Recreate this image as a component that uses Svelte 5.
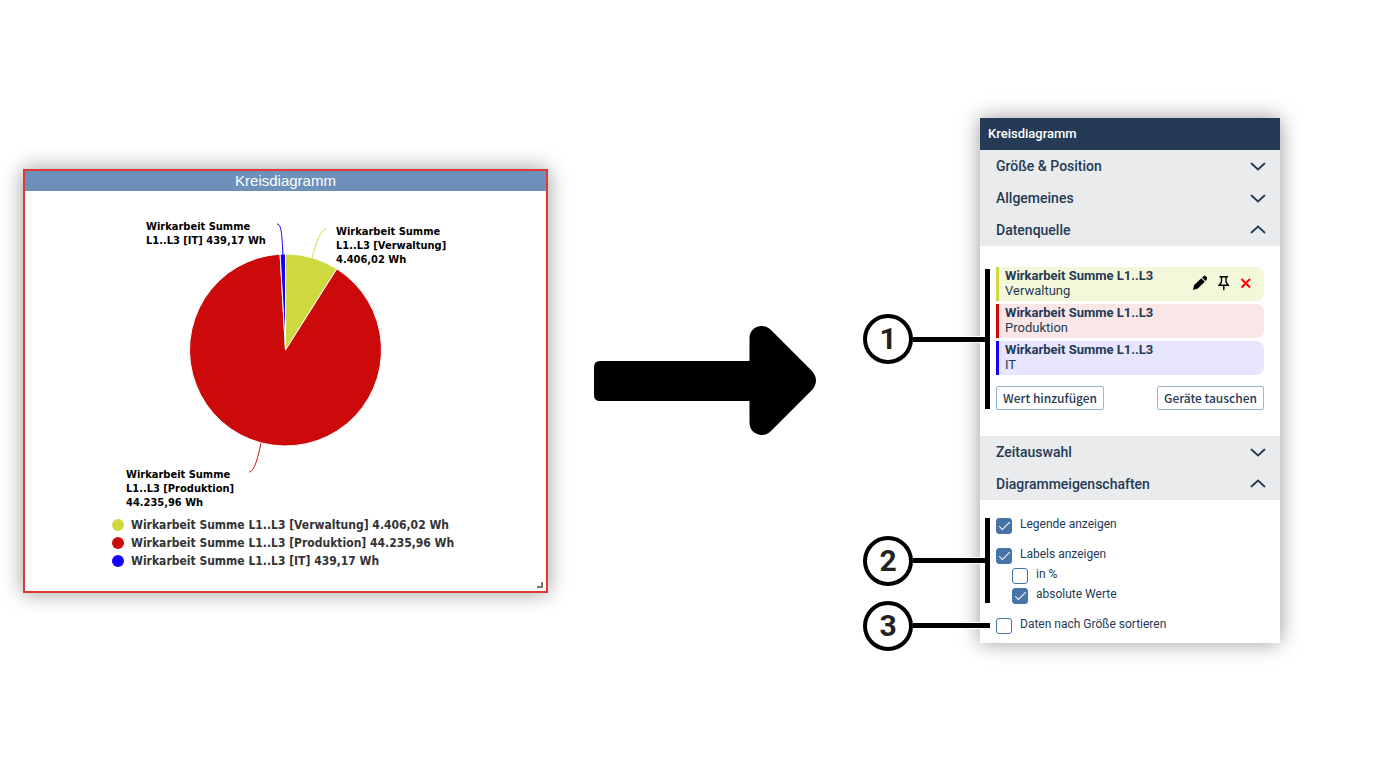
<script lang="ts">
  interface Series {
    name: string;
    device: string;
    value: number;
    unit: string;
    color: string;
    background: string;
    labelX: number;
    labelY: number;
    lines: string[];
    connector: string;
  }

  const series: Series[] = [
    {
      name: 'Wirkarbeit Summe L1..L3',
      device: 'Verwaltung',
      value: 4406.02,
      unit: 'Wh',
      color: '#cfda41',
      background: '#f4f7d9',
      labelX: 311,
      labelY: 44,
      lines: ['Wirkarbeit Summe', 'L1..L3 [Verwaltung]', '4.406,02 Wh'],
      connector: 'M301 38C296 38 291 52 287 67',
    },
    {
      name: 'Wirkarbeit Summe L1..L3',
      device: 'Produktion',
      value: 44235.96,
      unit: 'Wh',
      color: '#cc0a0a',
      background: '#fae6e6',
      labelX: 101,
      labelY: 287,
      lines: ['Wirkarbeit Summe', 'L1..L3 [Produktion]', '44.235,96 Wh'],
      connector: 'M224 281C229 281 233 267 236 252',
    },
    {
      name: 'Wirkarbeit Summe L1..L3',
      device: 'IT',
      value: 439.17,
      unit: 'Wh',
      color: '#1400ff',
      background: '#e7e5ff',
      labelX: 121,
      labelY: 39,
      lines: ['Wirkarbeit Summe', 'L1..L3 [IT] 439,17 Wh'],
      connector: 'M252 33C257 33 257 48 258 64',
    },
  ];

  const cx = 260.5;
  const cy = 159;
  const radius = 96;
  const total = series.reduce((sum, s) => sum + s.value, 0);

  function point(share: number) {
    const angle = share * 2 * Math.PI;
    return `${cx + radius * Math.sin(angle)} ${cy - radius * Math.cos(angle)}`;
  }

  let offset = 0;
  const slices = series.map((s) => {
    const start = offset / total;
    offset += s.value;
    const end = offset / total;
    const large = end - start > 0.5 ? 1 : 0;
    return {
      color: s.color,
      d: `M${cx} ${cy}L${point(start)}A${radius} ${radius} 0 ${large} 1 ${point(end)}Z`,
    };
  });

  function format(value: number) {
    const [int, dec] = value.toFixed(2).split('.');
    return int.replace(/\B(?=(\d{3})+$)/g, '.') + ',' + dec;
  }

  let sections = $state({
    size: false,
    general: false,
    source: true,
    time: false,
    chart: true,
  });

  let showLegend = $state(true);
  let showLabels = $state(true);
  let inPercent = $state(false);
  let absolute = $state(true);
  let sorted = $state(false);
</script>

{#snippet sectionHeader(key: keyof typeof sections, title: string)}
  <button
    class="section-header"
    aria-expanded={sections[key]}
    onclick={() => (sections[key] = !sections[key])}
  >
    <span>{title}</span>
    <svg class="chevron" class:open={sections[key]} viewBox="0 0 16 10" aria-hidden="true">
      <path d="M1.500 2.500L8 8.500L14.500 2.500" />
    </svg>
  </button>
{/snippet}

{#snippet callout(number: number, bracket: boolean)}
  <div class="callout">
    <span class="callout-number">{number}</span>
    <span class="callout-line"></span>
    <span class="callout-bar" class:bracket></span>
  </div>
{/snippet}

<main class="page">
  <section class="widget">
    <h2 class="widget-title">Kreisdiagramm</h2>
    <svg class="pie" viewBox="0 0 521 325" role="img" aria-label="Kreisdiagramm">
      {#each slices as slice}
        <path d={slice.d} fill={slice.color} stroke="#fff" stroke-linejoin="round" />
      {/each}
      {#if showLabels}
        {#each series as s (s.device)}
          <path d={s.connector} fill="none" stroke={s.color} />
          <text class="pie-label" y={s.labelY}>
            {#each s.lines as line, i}
              <tspan x={s.labelX} dy={i ? 14 : 0}>{line}</tspan>
            {/each}
          </text>
        {/each}
      {/if}
    </svg>
    {#if showLegend}
      <ul class="legend">
        {#each series as s (s.device)}
          <li>
            <span class="dot" style="background: {s.color}"></span>
            {s.name} [{s.device}] {format(s.value)} {s.unit}
          </li>
        {/each}
      </ul>
    {/if}
    <span class="resize-handle"></span>
  </section>

  <svg class="arrow" viewBox="0 0 222 111" aria-hidden="true">
    <path
      d="M6 36H155.500V13C155.500 2 169 -3 177 5L218 46Q226 55.500 218 65L177 106C169 114 155.500 109 155.500 98V76H6Q0 76 0 70V42Q0 36 6 36Z"
    />
  </svg>

  <aside class="panel">
    <h2 class="panel-title">Kreisdiagramm</h2>
    {@render sectionHeader('size', 'Größe & Position')}
    {@render sectionHeader('general', 'Allgemeines')}
    {@render sectionHeader('source', 'Datenquelle')}
    {#if sections.source}
      <div class="source-content">
        <div class="annotated">
          {@render callout(1, true)}
          <ul class="values">
            {#each series as s, i (s.device)}
              <li class="value" style="border-color: {s.color}; background: {s.background}">
                <div class="value-text">
                  <strong>{s.name}</strong>
                  <span>{s.device}</span>
                </div>
                {#if i === 0}
                  <div class="value-actions">
                    <button aria-label="Bearbeiten">
                      <svg viewBox="0 0 16 16">
                        <path
                          d="M1 15L2.200 10L9.300 3.200L12.800 6.700L5.800 13.600ZM10.100 2.400L11.600 1Q13 .1 14.300 1.500Q15.700 3 14.800 4.400L13.500 5.900Z"
                        />
                      </svg>
                    </button>
                    <button aria-label="Anheften">
                      <svg viewBox="0 0 16 16" class="outline">
                        <path d="M4.500 1.700H13M6.500 1.700V7L4.200 10.300H13.300L11 7V1.700M8.800 10.300V15.300" />
                      </svg>
                    </button>
                    <button aria-label="Entfernen">
                      <svg viewBox="0 0 16 16" class="outline remove">
                        <path d="M3.500 4L12 12.500M12 4L3.500 12.500" />
                      </svg>
                    </button>
                  </div>
                {/if}
              </li>
            {/each}
          </ul>
          <div class="source-buttons">
            <button>Wert hinzufügen</button>
            <button>Geräte tauschen</button>
          </div>
        </div>
      </div>
    {/if}
    {@render sectionHeader('time', 'Zeitauswahl')}
    {@render sectionHeader('chart', 'Diagrammeigenschaften')}
    {#if sections.chart}
      <div class="chart-content">
        <div class="annotated">
          {@render callout(2, true)}
          <label class="option">
            <input type="checkbox" bind:checked={showLegend} />
            <span>Legende anzeigen</span>
          </label>
          <div class="option-group">
            <label class="option">
              <input type="checkbox" bind:checked={showLabels} />
              <span>Labels anzeigen</span>
            </label>
            <label class="option nested">
              <input type="checkbox" bind:checked={inPercent} />
              <span>in %</span>
            </label>
            <label class="option nested">
              <input type="checkbox" bind:checked={absolute} />
              <span>absolute Werte</span>
            </label>
          </div>
        </div>
        <div class="annotated">
          {@render callout(3, false)}
          <label class="option">
            <input type="checkbox" bind:checked={sorted} />
            <span>Daten nach Größe sortieren</span>
          </label>
        </div>
      </div>
    {/if}
  </aside>
</main>

<style>
  :global(body) {
    margin: 0;
    background: #fff;
  }

  .page {
    display: flex;
    align-items: center;
    box-sizing: border-box;
    min-height: 100vh;
    padding: 0 118px 0 23px;
    font-family: Roboto, sans-serif;
    color: #243a55;
  }

  h2,
  ul {
    margin: 0;
    padding: 0;
    list-style: none;
  }

  button {
    cursor: pointer;
  }

  .widget {
    position: relative;
    flex: 1;
    padding-bottom: 21px;
    border: 2px solid #de3a35;
    background: #fff;
    box-shadow: 0 0 20px rgba(0, 0, 0, 0.4);
  }

  .widget-title {
    background: #6c90ba;
    color: #fff;
    font: 15px/20px 'Liberation Sans', sans-serif;
    text-align: center;
  }

  .pie {
    display: block;
    width: 100%;
  }

  .pie-label {
    font: bold 11px 'DejaVu Sans Condensed', 'DejaVu Sans', sans-serif;
    fill: #000;
  }

  .legend {
    padding-left: 87px;
    color: #333;
    font: bold 12px/18px 'DejaVu Sans Condensed', 'DejaVu Sans', sans-serif;
  }

  .legend li {
    display: flex;
    align-items: center;
    gap: 7px;
  }

  .dot {
    width: 12px;
    height: 12px;
    border-radius: 50%;
  }

  .resize-handle {
    position: absolute;
    right: 3px;
    bottom: 3px;
    width: 4px;
    height: 4px;
    border: solid #777;
    border-width: 0 2px 2px 0;
  }

  .arrow {
    flex: none;
    width: 222px;
    margin: 0 164px 0 46px;
    overflow: visible;
  }

  .panel {
    flex: none;
    width: 300px;
    background: #fff;
    box-shadow: 0 0 20px rgba(0, 0, 0, 0.4);
  }

  .panel-title {
    padding: 0 8px;
    background: #243a55;
    color: #fff;
    font-size: 13px;
    font-weight: 500;
    line-height: 32px;
  }

  .section-header {
    display: flex;
    align-items: center;
    justify-content: space-between;
    width: 100%;
    height: 32px;
    padding: 0 14px 0 16px;
    border: 0;
    background: #e9ebec;
    color: inherit;
    font: 500 14px/32px Roboto, sans-serif;
  }

  .chevron {
    width: 16px;
    height: 10px;
    fill: none;
    stroke: currentColor;
    stroke-width: 1.8;
    stroke-linecap: round;
  }

  .chevron.open {
    transform: rotate(180deg);
  }

  .source-content {
    padding: 21px 16px 26px;
  }

  .annotated {
    position: relative;
  }

  .values {
    display: flex;
    flex-direction: column;
    gap: 3px;
  }

  .value {
    display: flex;
    align-items: center;
    justify-content: space-between;
    box-sizing: border-box;
    height: 34px;
    padding: 0 10px 2px 6px;
    border-left: 3px solid;
    border-radius: 0 8px 8px 0;
    font-size: 13px;
    line-height: 15px;
  }

  .value-text {
    display: flex;
    flex-direction: column;
  }

  .value-text strong {
    font-weight: 700;
  }

  .value-actions {
    display: flex;
    gap: 7px;
  }

  .value-actions button {
    padding: 0;
    border: 0;
    background: none;
  }

  .value-actions svg {
    display: block;
    width: 16px;
    height: 16px;
  }

  .outline {
    fill: none;
    stroke: #000;
    stroke-width: 1.4;
  }

  .outline.remove {
    stroke: #f00;
    stroke-width: 2;
  }

  .source-buttons {
    display: flex;
    justify-content: space-between;
    margin-top: 11px;
  }

  .source-buttons button {
    height: 24px;
    padding: 0 6px;
    border: 1px solid #9db4cf;
    border-radius: 2px;
    background: #fff;
    color: inherit;
    font: 500 12px/20px 'Noto Sans CJK SC', sans-serif;
  }

  .chart-content {
    display: flex;
    flex-direction: column;
    gap: 12px;
    padding: 16px 16px 9px;
  }

  .option-group {
    display: flex;
    flex-direction: column;
    gap: 2px;
    margin-top: 12px;
  }

  .option {
    display: flex;
    align-items: flex-start;
    gap: 8px;
    font-size: 12px;
    line-height: 16px;
  }

  .option.nested {
    margin-left: 16px;
  }

  .option input {
    appearance: none;
    display: grid;
    place-items: center;
    box-sizing: border-box;
    width: 16px;
    height: 16px;
    margin: 2px 0 0;
    border: 1px solid #4674a8;
    border-radius: 3px;
    background: #fff;
  }

  .option input:checked {
    background: #4674a8;
  }

  .option input:checked::after {
    content: '';
    width: 4px;
    height: 10px;
    margin-bottom: 3px;
    border: solid #fff;
    border-width: 0 1px 1px 0;
    transform: rotate(45deg);
  }

  /* numbered markers hang out over the left edge of the panel */
  .callout {
    position: absolute;
    top: 2px;
    bottom: 1px;
    left: -133px;
    display: flex;
    align-items: center;
    width: 127px;
    pointer-events: none;
  }

  .callout-number {
    box-sizing: border-box;
    width: 50px;
    height: 50px;
    border: 4px solid #000;
    border-radius: 50%;
    background: #fff;
    color: #222;
    font: bold 30px/42px Roboto, sans-serif;
    text-align: center;
  }

  .callout-line {
    flex: 1;
    height: 5px;
    background: #000;
    box-shadow: 0 1px #fff, 0 -1px #fff;
  }

  .callout-bar {
    width: 5px;
    height: 5px;
    background: #000;
  }

  .callout-bar.bracket {
    height: 100%;
  }
</style>
